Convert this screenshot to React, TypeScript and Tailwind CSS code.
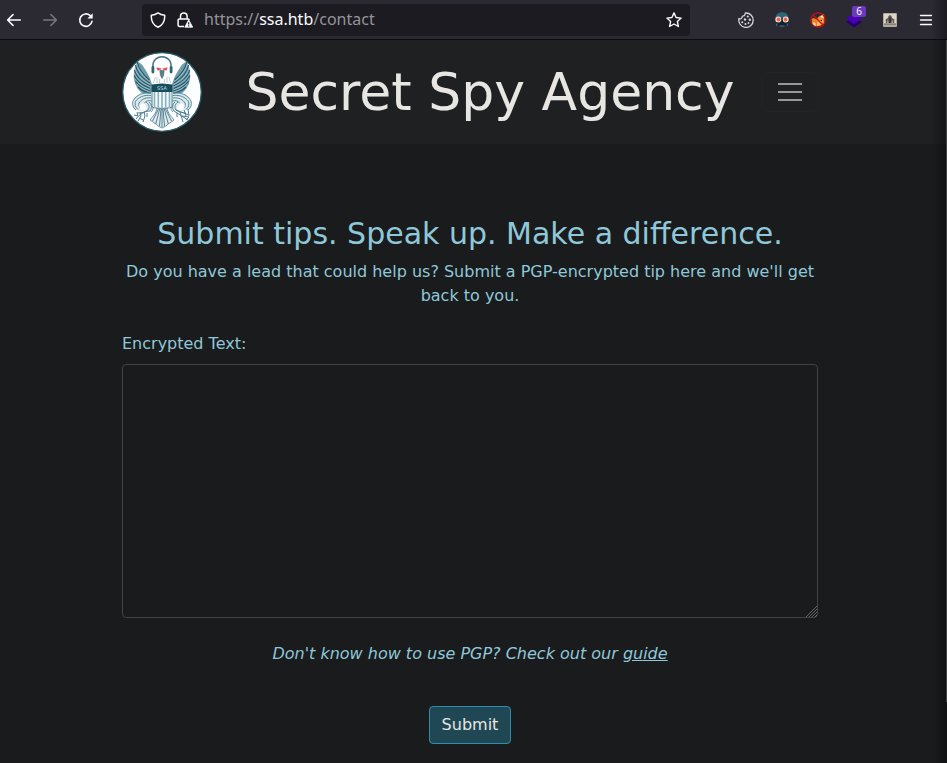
import React from "react";

function BackIcon() {
  return (
    <svg viewBox="0 0 16 16" className="size-4" fill="none" stroke="currentColor" strokeWidth="1.5" strokeLinecap="round" strokeLinejoin="round" aria-hidden="true">
      <path d="M14.3 8H1.8M7 2.6 1.6 8 7 13.4" />
    </svg>
  );
}

function ForwardIcon() {
  return (
    <svg viewBox="0 0 16 16" className="size-4" fill="none" stroke="currentColor" strokeWidth="1.5" strokeLinecap="round" strokeLinejoin="round" aria-hidden="true">
      <path d="M1.7 8h12.5M9 2.6 14.4 8 9 13.4" />
    </svg>
  );
}

function ReloadIcon() {
  return (
    <svg viewBox="0 0 16 16" className="size-4" fill="none" stroke="currentColor" strokeWidth="1.6" strokeLinecap="round" aria-hidden="true">
      <path d="M14 9.4A6.2 6.2 0 1 1 12.2 3.6" />
      <path d="M14.7 1.2v5.3H9.4z" fill="currentColor" stroke="none" />
    </svg>
  );
}

function ShieldIcon() {
  return (
    <svg viewBox="0 0 16 16" className="size-4" fill="none" stroke="currentColor" strokeWidth="1.5" strokeLinejoin="round" aria-hidden="true">
      <path d="M8 .9C6.2 2.2 3.8 3 1.3 3.2 1 9 3.3 13.2 8 15.2c4.7-2 7-6.2 6.7-12C12.2 3 9.8 2.2 8 .9z" />
    </svg>
  );
}

function LockWarningIcon() {
  return (
    <svg viewBox="0 0 16 16" className="size-4" fill="none" stroke="currentColor" strokeWidth="1.5" aria-hidden="true">
      <path d="M3.5 6.800V4.200a3.300 3.300 0 0 1 6.600 0v2.600M7 14.400H2.400a1.300 1.300 0 0 1-1.300-1.300V8.200a1.300 1.300 0 0 1 1.300-1.300h8.700a1.300 1.300 0 0 1 1.200 1" />
      <path d="M11.700 7.800 7.800 15.200h7.900z" fill="currentColor" strokeLinejoin="round" strokeWidth=".8" />
      <path d="M11.700 10.200v2.300M11.700 13.200v1.200" stroke="#1c1b22" strokeWidth="1.200" />
    </svg>
  );
}

function StarIcon() {
  return (
    <svg viewBox="0 0 16 16" className="size-4" fill="none" stroke="currentColor" strokeWidth="1.400" strokeLinejoin="round" aria-hidden="true">
      <path d="m8 .9 2.100 4.600 5 .6-3.700 3.400 1 5L8 12l-4.400 2.500 1-5L.9 6.100l5-.6z" />
    </svg>
  );
}

function CookieIcon() {
  return (
    <svg viewBox="0 0 16 16" className="size-4" fill="none" stroke="#d6d6da" strokeWidth="1.300" strokeLinejoin="round" aria-hidden="true">
      <path d="M7.500 1A7.200 7.200 0 1 1 1 6.500c1 .8 2.300.5 2.800-.5.4-1 .2-1.500.6-1.800.5-.4 1.300-.1 2-.7C7.300 2.800 6.800 1.700 7.500 1z" />
      <g fill="#d6d6da" stroke="none">
        <circle cx="9.800" cy="4.500" r="1.100" />
        <circle cx="7" cy="7.500" r="1.200" />
        <circle cx="11.800" cy="7.800" r="1.200" />
        <circle cx="4.300" cy="10.200" r="1" />
        <circle cx="7.500" cy="12" r="1.100" />
        <circle cx="10.500" cy="11" r=".9" />
      </g>
    </svg>
  );
}

function MaskIcon() {
  return (
    <svg viewBox="0 0 16 16" className="size-4" aria-hidden="true">
      <path d="M1.500 6.500C1.500 2.500 4 .3 8 .3s6.500 2.200 6.500 6.200z" fill="#2b6877" />
      <path d="M1.800 6h12.400L13.500 14h-11z" fill="#14212d" />
      <circle cx="4.300" cy="7.500" r="3" fill="#f4ddd6" />
      <circle cx="11.700" cy="7.500" r="3" fill="#f4ddd6" />
      <circle cx="4.500" cy="7.500" r="1.900" fill="#e9674f" />
      <circle cx="11.500" cy="7.500" r="1.900" fill="#e9674f" />
      <path d="M2.800 11.500v2.500M13.200 11.500v2.500M5.500 14h5" stroke="#388399" strokeWidth="1" fill="none" />
    </svg>
  );
}

function FoxIcon() {
  return (
    <svg viewBox="0 0 16 16" className="size-4" aria-hidden="true">
      <path d="m1.500 7 2-1L6 7l3-2.500 5-2.700.5 5.200-.5 5L9.500 14l-5 .8L2 12z" fill="#e48521" />
      <path d="m7 11 2-4 3-.5 1 3-2 3.500-4 1z" fill="#f5b85c" />
      <path d="m9.500 5 4-2.300v3.500z" fill="#f6dcb4" />
      <path d="m2 12 2-2 2 2-1 2.500z" fill="#f6dcb4" />
      <circle cx="11.300" cy="8.300" r=".9" fill="#442c23" />
      <circle cx="8" cy="8" r="7.200" fill="none" stroke="#c70f16" strokeWidth="1.300" />
      <path d="m3 3 10 10" stroke="#c70f16" strokeWidth="1.400" />
    </svg>
  );
}

function LayersIcon() {
  return (
    <svg viewBox="0 0 16 16" className="size-4" aria-hidden="true">
      <path d="m0 10 8-5 8 5-8 5.500z" fill="#24006c" />
      <path d="m0 6.500 8-5 8 5-8 5.500z" fill="#4b00b5" />
    </svg>
  );
}

function PortraitIcon() {
  return (
    <svg viewBox="0 0 14 14" className="size-3.5" aria-hidden="true">
      <rect width="14" height="14" rx="1" fill="#b3a99d" />
      <path d="M1 1h12v9H1z" fill="#ddd5c7" />
      <path d="M3 10 2.500 6.500 5 5l.5-2L7 2l1.500 1L9 5l2.500 1.500L11 10z" fill="#5c5955" />
      <path d="M4 7.500h1.500V10H4zM8.500 7.500H10V10H8.500z" fill="#a9998a" />
      <path d="M6.300 4.500h1.400V10H6.300z" fill="#252425" />
      <path d="M1 10.500h12v1.500H1z" fill="#8a8179" />
    </svg>
  );
}

function MenuIcon() {
  return (
    <svg viewBox="0 0 16 16" className="size-4" stroke="currentColor" strokeWidth="1.300" strokeLinecap="round" aria-hidden="true">
      <path d="M2.500 3.500h11M2.500 8h11M2.500 12.500h11" />
    </svg>
  );
}

function WingHalf() {
  return (
    <g>
      <path d="M15 9.500c3.500 1.500 6 3.500 7.500 7 2 3 4 6 5.500 10l2 6-1 9.500-5 .5-5-2-3.500-4-2.500-5-1.300-6 .3-6 1-4z" fill="#6d9cab" />
      <g fill="none" stroke="#255566" strokeWidth="1.100">
        <path d="M15.300 10c1 5 5 12 12 18M13.500 13c1 6 6 13 14.500 18M12.500 18c1 6 7 12 16 16M12.300 23.500c2 6 8 10 16 13M13.500 29c3 5 8 8 15 10M16 35c3 3 7 5 12 6" />
      </g>
      <g fill="none" stroke="#b9d1d8" strokeWidth=".6">
        <path d="M14.500 12c1 5 5 11 13 17.500M13 16c1 6 7 12 15 16.500M12.500 21c2 6 8 10.500 16 14M13 26.500c3 5 8 8.500 15 11M15 32c3 4 8 6 13 8" />
      </g>
      <path d="M29 42c-7-2-14 1-17 6-2 4-1 8 2 10 4 1 9 1 15 0l2-4V46z" fill="#dce9ec" />
      <g fill="none" stroke="#477d8e" strokeWidth=".9">
        <path d="M29 41c-8-1-15 2-18 8-1 3 0 7 3 9M29 43.500c-7-1-13 2-15.500 6-1 3 0 6 2.500 8M29 46c-6-1-10 2-12 5-1 2 0 3 1 5M29.500 49c-3-1-6 0-7 2" />
        <path d="M24 50c3 2 4 5 2 8-3 2-6 3-10 3M27 50c3 3 3 6 1 9M30 52c2 3 1 6-1 8" />
      </g>
      <path d="M17.500 55c-.5-3.500 4-5 6-1.500l1.500 3.500-3 1.500c-2 0-4-1-4.500-3.500z" fill="#fff" />
    </g>
  );
}

function AgencySeal() {
  return (
    <svg viewBox="0 0 80 80" className="size-20 shrink-0" role="img" aria-label="Agency seal">
      <circle cx="40" cy="40" r="39.300" fill="#fff" stroke="#295b6b" strokeWidth="1.300" />
      <WingHalf />
      <g transform="matrix(-1 0 0 1 80 0)">
        <WingHalf />
      </g>
      <path d="M35 56c-1 6-5 9-7 12l3.500 2.500 3 2 2.500 2L40 76l3-1.500 2.500-2 3-2L52 68c-2-3-6-6-7-12z" fill="#dfebee" stroke="#3b6f80" strokeWidth=".7" />
      <path d="m36.500 57-6 12M37.700 57l-4 15M39 57l-1.500 17M40 57v18M41 57l1.500 17M42.300 57l4 15M43.500 57l6 12" stroke="#37697b" strokeWidth=".8" />
      <path d="M34.500 14c0-5 11-5 11 0l1 7 1.500 11H32l1.500-11z" fill="#fbfcfc" />
      <path d="m33 25-1.500 6M35 25v6M37.500 27v4M42.500 27v4M45 25v6M47 25l1.500 6" fill="none" stroke="#a3bfc8" strokeWidth=".7" />
      <path d="m34.800 15.800 4.500 1.200-3.500 1.200zM45.200 15.800l-4.500 1.200 3.500 1.200z" fill="#ea3947" stroke="#ea3947" strokeWidth=".6" />
      <path d="M37.800 18.500h4.400l-.7 5L40 26.500 38.500 23.500z" fill="#5d7f8b" stroke="#2e5867" strokeWidth=".5" />
      <path d="M31 16C29 1 51 1 49 16" fill="none" stroke="#437483" strokeWidth="1.500" />
      <rect x="29.500" y="14" width="2.800" height="7.500" rx="1.400" fill="#326475" />
      <rect x="47.700" y="14" width="2.800" height="7.500" rx="1.400" fill="#326475" />
      <path d="M30 36h20v19c-3 2-8 0-10 2-2-2-7 0-10-2z" fill="#f4f9fa" stroke="#2d6474" strokeWidth=".8" />
      <path d="M32.500 40v15M36.300 40v15M40 40v16M43.700 40v15M47.500 40v15" stroke="#86b1c0" strokeWidth="1.600" />
      <path d="M29.500 32.500 40 31.500l10.500 1V40h-21z" fill="#174c5d" />
      <text x="40" y="37.800" textAnchor="middle" fontSize="5" fill="#c8dce1" className="font-['DejaVu_Sans',sans-serif]">SSA</text>
      <g fill="none" stroke="#4c7d8c" strokeWidth="1">
        <path d="M28 59c-6 0-11 4-14 8M15 60l1 4-4-1M18 60l1 4-3 5M22 60l1 4-2 6M17 66l4 2M25 61v4" />
        <path d="m52 59 14 9M54 58l13 5M58 60l3 10M60 64l7 1-3 3M62 58l2 6M66 57l1 7M55 61v4" />
      </g>
    </svg>
  );
}

function BrowserBar() {
  return (
    <header className="flex h-10 items-center border-b border-[#0d0d0f] bg-[#2b2a33] pr-[13px] pl-1.5 text-[#fbfbfe]">
      <nav aria-label="Browser" className="flex items-center gap-5">
        <button type="button" aria-label="Back"><BackIcon /></button>
        <button type="button" aria-label="Forward" disabled className="text-[#77767d]"><ForwardIcon /></button>
        <button type="button" aria-label="Reload"><ReloadIcon /></button>
      </nav>
      <div className="ml-12 flex h-8 min-w-0 flex-1 items-center rounded-sm bg-[#1c1b22] px-2">
        <ShieldIcon />
        <span className="ml-[11px]"><LockWarningIcon /></span>
        <div className="ml-[11px] min-w-0 flex-1 truncate pb-0.5 font-['Noto_Sans',sans-serif] text-base text-[#94939a]">
          https://<span className="text-[#fbfbfe]">ssa.htb</span>/contact
        </div>
        <button type="button" aria-label="Bookmark this page"><StarIcon /></button>
      </div>
      <div className="ml-12 flex items-center gap-5">
        <button type="button" aria-label="Cookies"><CookieIcon /></button>
        <button type="button" aria-label="Mask"><MaskIcon /></button>
        <button type="button" aria-label="Fox"><FoxIcon /></button>
        <button type="button" aria-label="Layers" className="relative">
          <LayersIcon />
          <span className="absolute -top-1.5 left-1.5 flex h-[11px] w-3.5 items-center justify-center rounded-xs bg-[#6b39bd] font-['Noto_Sans',sans-serif] text-[10px] leading-none">6</span>
        </button>
        <button type="button" aria-label="Portrait" className="flex size-4 items-center justify-center"><PortraitIcon /></button>
        <button type="button" aria-label="Application menu"><MenuIcon /></button>
      </div>
    </header>
  );
}

function SiteHeader() {
  return (
    <div className="bg-[#1e2022] py-3 pr-[7px]">
      <div className="mx-auto flex max-w-[720px] items-center justify-between px-3">
        <span className="mr-4 shrink-0"><AgencySeal /></span>
        <a href="#home" className="text-[52px] leading-[78px] whitespace-nowrap text-[#e8e6e3]">Secret Spy Agency</a>
        <button type="button" aria-label="Toggle navigation" className="flex h-10 w-14 flex-col items-center justify-center gap-1.5 rounded-md border border-[#212325]">
          <span className="h-0.5 w-6 bg-[#989897]" />
          <span className="h-0.5 w-6 bg-[#989897]" />
          <span className="h-0.5 w-6 bg-[#989897]" />
        </button>
      </div>
    </div>
  );
}

export default function App() {
  return (
    <div className="relative min-h-screen bg-[#1a1b1d] font-['DejaVu_Sans',sans-serif] text-base text-[#8fc8d8]">
      <BrowserBar />
      <SiteHeader />
      <main className="pr-[7px]">
        <form className="mx-auto flex max-w-[720px] flex-col px-3 pt-[72px] pb-4" onSubmit={(e) => e.preventDefault()}>
          <h1 className="text-center text-[30px] leading-9">Submit tips. Speak up. Make a difference.</h1>
          <p className="mt-2 text-center">
            Do you have a lead that could help us? Submit a PGP-encrypted tip here and we'll get back to you.
          </p>
          <label htmlFor="tip" className="mt-6">Encrypted Text:</label>
          <div className="relative mt-2 flex">
            <textarea id="tip" className="h-[254px] w-full resize-none rounded-sm border border-[#414345] bg-[#1a1b1d] px-3 py-1.5 text-[#e8e6e3] outline-none" />
            <svg viewBox="0 0 11 11" className="pointer-events-none absolute right-px bottom-px size-[11px]" stroke="#666768" strokeWidth="1" aria-hidden="true">
              <path d="M0 11 11 0M3 11l8-8M6 11l5-5M9 11l2-2" />
            </svg>
          </div>
          <p className="mt-6 text-center italic">
            Don't know how to use PGP? Check out our <a href="#guide" className="underline">guide</a>
          </p>
          <button type="submit" className="mt-10 self-center rounded-sm border border-[#308caa] bg-[#204854] px-3 py-1.5 leading-6 text-[#e8e6e3]">Submit</button>
        </form>
      </main>
      <div className="pointer-events-none absolute inset-y-0 right-0 w-4 bg-linear-to-r from-transparent to-black/35" />
      <div className="pointer-events-none absolute top-10 right-0 h-[662px] w-px bg-[#424446]" />
    </div>
  );
}
